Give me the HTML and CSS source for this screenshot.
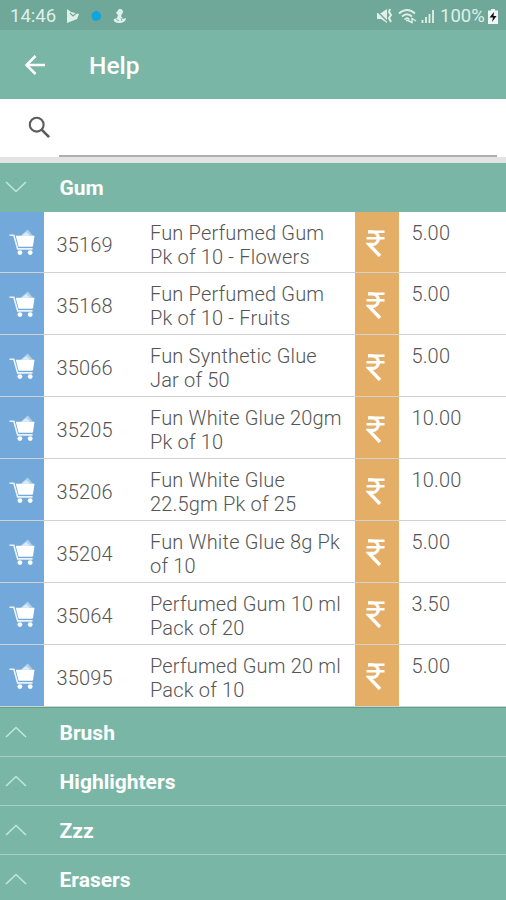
FILE: index.html
```html
<!DOCTYPE html>
<html lang="en">
<head>
<meta charset="utf-8">
<title>Help</title>
<link rel="stylesheet" href="styles.css">
</head>
<body>
<svg class="defs" aria-hidden="true">
  <symbol id="cart" viewBox="0 0 27 29">
    <path d="M.5 7.500H5l4 14.200h15.500" fill="none" stroke="#fff" stroke-opacity=".85" stroke-width="1.700"/>
    <path d="M7 8h19.500l-1.500 10.500q0 1-1.500 1H10z" fill="#fff"/>
    <path d="M12 8l7.500-6.500L25 8z" fill="#fff" opacity=".45"/>
    <path d="M13 8l5-3.500L22 8z" fill="#fff" opacity=".6"/>
    <circle cx="11.300" cy="25.500" r="2.500" fill="#fff"/>
    <circle cx="22" cy="25.500" r="2.500" fill="#fff"/>
  </symbol>
  <symbol id="rupee" viewBox="0 0 19 27">
    <path d="M2 1.800H18.500M.5 8.200H18.500" fill="none" stroke="#fff" stroke-width="2.600"/>
    <path d="M2 1.800H6c8.500 0 8.500 12.700 0 12.700H3L14 26" fill="none" stroke="#fff" stroke-width="3.300"/>
  </symbol>
  <symbol id="chevron" viewBox="0 0 22 12">
    <path d="M1 11L11 1.500 21 11" fill="none" stroke="#bfe9db" stroke-width="1.500"/>
  </symbol>
</svg>
<header>
  <div class="status">
    <span class="time">14:46</span>
    <svg class="play" viewBox="0 0 14 14"><path d="M1 0l4 3 8 2-2 5-10 4z" fill="#dff0ea"/><path d="M4 4l3 3 6-5" fill="none" stroke="#6fa898" stroke-width="1.200"/></svg>
    <svg class="dot" viewBox="0 0 12 12"><path d="M6 0l1.500 1.200A5.200 5.200 0 1 1 2.500 2z" fill="#10a5dd"/></svg>
    <svg class="figure" viewBox="0 0 14 15"><path d="M6 0a3 3 0 0 1 3 5L8 7l2 3 3-1c0 4-4 5-7 5-4 0-6-2-5-4l3-1 1-3-2-2z" fill="#dff0ea"/><path d="M3 10l3 2M8 9l1 3" stroke="#6fa898" stroke-width=".8"/></svg>
    <svg class="mute" viewBox="0 0 17 16"><path d="M1 5h4l6-4v14l-6-4H1z" fill="#dff0ea"/><path d="M0 2l11 11" stroke="#6fa898" stroke-width="1.300"/><path d="M14 1l-1 3 2 3-2 3 2 4" fill="none" stroke="#dff0ea" stroke-width="2"/></svg>
    <svg class="wifi" viewBox="0 0 20 16"><path d="M1 5.500q8-7 16 0M4 8.500q5-4.500 10 0M6.500 11.500q2.500-2.500 5 0" fill="none" stroke="#dff0ea" stroke-width="1.700"/><path d="M8 12.500h2l4 2v-4l4 2.500" fill="none" stroke="#dff0ea" stroke-width="1.400"/></svg>
    <svg class="signal" viewBox="0 0 14 15"><path d="M1.500 14v-3M5 14V8M8.500 14V5M12 14V1" stroke="#dff0ea" stroke-width="1.800"/></svg>
    <span class="percent">100%</span>
    <svg class="battery" viewBox="0 0 10 15"><path d="M3 0h4v1.500h3V15H0V1.500h3z" fill="#eef8f4"/><path d="M6 3L1.500 8.500H5L4 13l4.500-6H5.500z" fill="#111"/></svg>
  </div>
  <div class="toolbar">
    <svg class="back" viewBox="0 0 20 20"><path d="M20 10H2M10.500 1L1.500 10l9 9" fill="none" stroke="#fff" stroke-width="2.500"/></svg>
    <h1>Help</h1>
  </div>
</header>
<div class="search">
  <svg viewBox="0 0 23 23"><circle cx="8.700" cy="8.700" r="6.900" fill="none" stroke="#5c5c5c" stroke-width="2.100"/><path d="M13.600 13.600l7.500 7.500" stroke="#5c5c5c" stroke-width="2.700"/></svg>
  <div class="field"></div>
</div>
<main>
  <section class="group open"><svg><use href="#chevron"/></svg><h2>Gum</h2></section>
  <div class="items">
    <div class="row"><div class="cart"><svg><use href="#cart"/></svg></div><div class="code">35169</div><div class="name">Fun Perfumed Gum<br>Pk of 10 - Flowers</div><div class="rupee"><svg><use href="#rupee"/></svg></div><div class="price">5.00</div></div>
    <div class="row"><div class="cart"><svg><use href="#cart"/></svg></div><div class="code">35168</div><div class="name">Fun Perfumed Gum<br>Pk of 10 - Fruits</div><div class="rupee"><svg><use href="#rupee"/></svg></div><div class="price">5.00</div></div>
    <div class="row"><div class="cart"><svg><use href="#cart"/></svg></div><div class="code">35066</div><div class="name">Fun Synthetic Glue<br>Jar of 50</div><div class="rupee"><svg><use href="#rupee"/></svg></div><div class="price">5.00</div></div>
    <div class="row"><div class="cart"><svg><use href="#cart"/></svg></div><div class="code">35205</div><div class="name">Fun White Glue 20gm<br>Pk of 10</div><div class="rupee"><svg><use href="#rupee"/></svg></div><div class="price">10.00</div></div>
    <div class="row"><div class="cart"><svg><use href="#cart"/></svg></div><div class="code">35206</div><div class="name">Fun White Glue<br>22.5gm Pk of 25</div><div class="rupee"><svg><use href="#rupee"/></svg></div><div class="price">10.00</div></div>
    <div class="row"><div class="cart"><svg><use href="#cart"/></svg></div><div class="code">35204</div><div class="name">Fun White Glue 8g Pk<br>of 10</div><div class="rupee"><svg><use href="#rupee"/></svg></div><div class="price">5.00</div></div>
    <div class="row"><div class="cart"><svg><use href="#cart"/></svg></div><div class="code">35064</div><div class="name">Perfumed Gum 10 ml<br>Pack of 20</div><div class="rupee"><svg><use href="#rupee"/></svg></div><div class="price">3.50</div></div>
    <div class="row"><div class="cart"><svg><use href="#cart"/></svg></div><div class="code">35095</div><div class="name">Perfumed Gum 20 ml<br>Pack of 10</div><div class="rupee"><svg><use href="#rupee"/></svg></div><div class="price">5.00</div></div>
  </div>
  <section class="group"><svg><use href="#chevron"/></svg><h2>Brush</h2></section>
  <section class="group"><svg><use href="#chevron"/></svg><h2>Highlighters</h2></section>
  <section class="group"><svg><use href="#chevron"/></svg><h2>Zzz</h2></section>
  <section class="group"><svg><use href="#chevron"/></svg><h2>Erasers</h2></section>
</main>
</body>
</html>
```
FILE: styles.css
```css
* { box-sizing: border-box; }
body {
  margin: 0;
  height: 900px;
  overflow: hidden;
  background: #e4e4e4;
  font-family: Roboto, "Liberation Sans", sans-serif;
  color: #555;
}
svg { display: block; flex: none; }
.defs { position: absolute; width: 0; height: 0; }
h1, h2 { margin: 0; color: #fff; }

.status {
  display: flex;
  align-items: center;
  height: 30px;
  padding: 2px 8px 0 10px;
  background: #6fa898;
  color: #dff0ea;
  font-size: 18.500px;
}
.time { width: 56px; }
.play { width: 14px; height: 14px; }
.dot { width: 11px; height: 12px; margin-left: 11px; }
.figure { width: 14px; height: 15px; margin-left: 11px; }
.mute { width: 17px; height: 16px; margin-left: auto; }
.wifi { width: 20px; height: 16px; margin-left: 5px; }
.signal { width: 14px; height: 15px; margin-left: 3px; }
.percent { width: 46px; margin: 0 2px 0 5px; }
.battery { width: 10px; height: 15px; }

.toolbar {
  display: flex;
  align-items: center;
  height: 69px;
  padding: 0 25px;
  background: #79b6a6;
}
.back { width: 20px; height: 20px; }
h1 { margin-left: 44px; padding-top: 1px; font-size: 24.500px; font-weight: 500; }

.search {
  display: flex;
  height: 58px;
  padding-left: 28px;
  background: #fff;
}
.search svg { width: 23px; height: 23px; margin-top: 17px; }
.field { width: 438px; margin-left: 8px; border-bottom: 2px solid #b0b0b0; }

main { padding-top: 6px; }
.group {
  display: flex;
  align-items: center;
  height: 49.200px;
  padding-left: 5px;
  background: #79b6a6;
  border-bottom: 1px solid #a9cfc4;
}
.group svg { width: 22px; height: 12px; }
.group h2 { margin-left: 32.500px; padding-top: 2px; font-size: 21px; line-height: 26px; font-weight: 700; }
.group.open { height: 48.500px; border-bottom: 0; }
.open svg { transform: scaleY(-1); }

.items { display: grid; grid-auto-rows: 61.900px; border-bottom: 1px solid #639f8e; }
.row {
  display: grid;
  grid-template-columns: 44.400px 105.600px 205px 44.400px 1fr;
  background: #fff;
  border-bottom: 1px solid #d2d2d2;
  font-size: 20px;
  font-weight: 300;
  line-height: 24px;
  letter-spacing: 0.180px;
}
.cart, .rupee { display: flex; align-items: center; justify-content: center; }
.cart { background: #72a9da; }
.cart svg { width: 26px; height: 28px; margin-top: 1px; }
.rupee { background: #e5ae67; }
.rupee svg { width: 19px; height: 27px; margin-top: 3px; margin-right: 3px; }
.code { padding: 21px 0 0 12px; }
.name { padding-top: 9px; white-space: nowrap; }
.price { padding: 9px 0 0 12px; }
```
